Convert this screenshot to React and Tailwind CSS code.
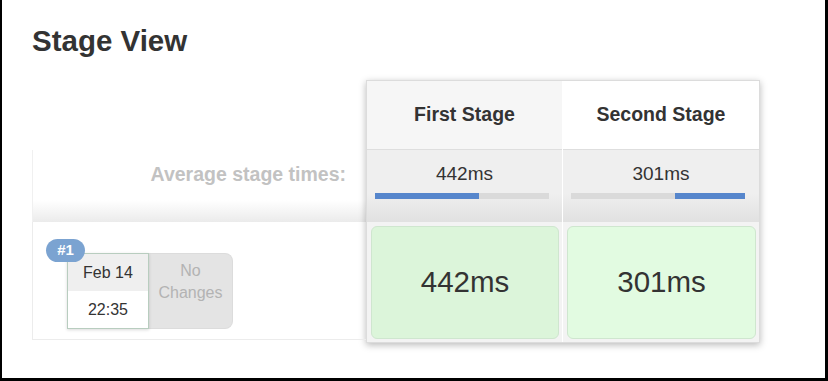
import React from 'react';

const stages = [
  { name: 'First Stage', avg: '442ms', start: 0, width: 59.5, run: '442ms', headBg: 'bg-[#f6f6f6]', cellBg: 'bg-[#dcf5da]' },
  { name: 'Second Stage', avg: '301ms', start: 59.5, width: 40.5, run: '301ms', headBg: 'bg-white', cellBg: 'bg-[#e2fbe1]' },
];

const App = () => {
  return (
    <div
      className="w-[828px] h-[381px] bg-white border-l-2 border-r-[3px] border-b-[3px] border-black text-[#333] overflow-hidden"
      style={{ fontFamily: '"Liberation Sans", Arial, sans-serif' }}
    >
      <h2 className="pl-[30px] pt-[23px] text-[29.5px] leading-[35px] font-bold text-[#333]">Stage View</h2>

      <div className="flex mt-[22px] ml-[30px]">
        {/* left column */}
        <div className="w-[334px] flex flex-col">
          <div className="h-[70px]" />
          <div className="h-[72px] border-l border-[#f0f0f0] bg-[linear-gradient(to_bottom,#ffffff_70%,#ebebeb)] pt-[13px] pr-[20px] text-right">
            <span className="text-[19.5px] leading-[22px] font-bold text-[#c2c2c2]">Average stage times:</span>
          </div>
          <div className="h-[118px] relative border-l border-b border-[#ececec] pl-[34px] pt-[31px]">
            <div className="absolute left-[13px] top-[17px] w-[39px] h-[23px] rounded-full bg-[#7ba3d1] text-white text-[15px] font-bold flex items-center justify-center z-10">
              #1
            </div>
            <div className="flex">
              <div className="w-[82px] h-[76px] border-[1.5px] border-[#b8cdbf] bg-white flex flex-col shadow-[0_1px_3px_rgba(0,0,0,0.15)] z-[1]">
                <div className="h-[37px] bg-[#efefef] flex items-center justify-center text-[16px] text-[#333]">Feb 14</div>
                <div className="flex-1 flex items-center justify-center text-[16px] text-[#333]">22:35</div>
              </div>
              <div className="w-[84px] h-[76px] bg-[#e4e4e4] rounded-r-[8px] border border-l-0 border-[#dcdcdc] pt-[6px] text-center text-[16px] leading-[22px] text-[#b3b3b3]">
                No<br />Changes
              </div>
            </div>
          </div>
        </div>

        {/* stage box */}
        <div className="w-[394px] border border-[#dcdcdc] shadow-[0_2px_7px_rgba(0,0,0,0.28)] flex bg-white">
          {stages.map((s, i) => (
            <div key={s.name} className={`w-1/2 flex flex-col ${i === 0 ? 'border-r border-white' : ''}`}>
              <div className={`h-[69px] border-b border-[#dedede] ${s.headBg} flex items-center justify-center text-[19.5px] font-bold text-[#333]`}>
                {s.name}
              </div>
              <div className="h-[72px] bg-[linear-gradient(to_bottom,#efefef_60%,#e1e1e1)] pt-[13px]">
                <div className="text-center text-[19px] leading-[22px] text-[#333]">{s.avg}</div>
                <div className="relative mt-[8px] ml-[8px] w-[174px] h-[6px] bg-[#dadada]">
                  <div
                    className="absolute top-0 h-full bg-[#5686cc]"
                    style={{ left: `${s.start}%`, width: `${s.width}%` }}
                  />
                </div>
              </div>
              <div className="h-[120px] bg-[#f3f3f3] pt-[4px] pb-[3px] pl-[4px] pr-[3px]">
                <div className={`h-full ${s.cellBg} border border-[#cfe6cf] rounded-[6px] flex items-center justify-center text-[29.5px] text-[#333]`}>
                  {s.run}
                </div>
              </div>
            </div>
          ))}
        </div>
      </div>
    </div>
  );
};

export default App;
